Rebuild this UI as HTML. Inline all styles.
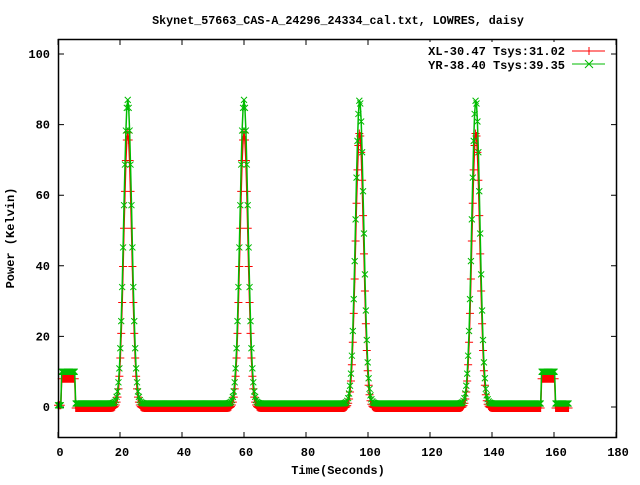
<!DOCTYPE html>
<html><head><style>
body{margin:0;background:#fff}
svg text{font-family:"Liberation Mono",monospace;font-weight:bold;font-size:12px;fill:#000}
</style></head><body>
<svg id="s" width="640" height="480" xmlns="http://www.w3.org/2000/svg">
<rect width="640" height="480" fill="#fff"/>
<text x="338" y="24" text-anchor="middle" style="font-size:11.7px">Skynet_57663_CAS-A_24296_24334_cal.txt, LOWRES, daisy</text>
<g id="ticks"></g>
<g id="data"></g>
<rect x="58.5" y="39.5" width="558" height="398" fill="none" stroke="#000" stroke-width="1.5"/>
<rect x="428" y="42" width="180" height="30" fill="#fff"/>
<text x="565" y="55" text-anchor="end">XL-30.47 Tsys:31.02</text>
<text x="565" y="69" text-anchor="end">YR-38.40 Tsys:39.35</text>
<line x1="572" y1="51" x2="605" y2="51" stroke="#f00"/>
<path d="M589 47v8" stroke="#f00"/>
<line x1="572" y1="64" x2="605" y2="64" stroke="#0b0"/>
<path d="M585 60l8 8M593 60l-8 8" stroke="#0b0"/>
<text x="338" y="474" text-anchor="middle">Time(Seconds)</text>
<text transform="translate(14,238) rotate(-90)" text-anchor="middle">Power (Kelvin)</text>
</svg>
<script>
function X(s){return 58+3.1*s}function Y(v){return 407-3.53*v}
var t=document.getElementById("ticks"),h="";
for(var v=0;v<=100;v+=20){h+='<text x="50" y="'+(Y(v)+4)+'" text-anchor="end">'+v+'</text>';
h+='<path d="M58 '+Y(v)+'h6M617 '+Y(v)+'h-6" stroke="#000"/>';}
for(var s=0;s<=180;s+=20){h+='<text x="'+(X(s)+2)+'" y="456" text-anchor="middle">'+s+'</text>';
h+='<path d="M'+X(s)+' 438v-6M'+X(s)+' 39v6" stroke="#000"/>';}
t.innerHTML=h;
var peaks=[22.5,60,97.3,134.8];
function f(s,pk,base,step){var v=base;
if((s>=1&&s<5.5)||(s>=156&&s<160.5))v=step;
for(var i=0;i<peaks.length;i++){var d=s-peaks[i];v+=pk*Math.exp(-d*d/(2*1.3*1.3));}return v;}
var d=document.getElementById("data"),o="";
function series(pk,base,step,col,mk){var p="",m="";
for(var s=0;s<=165;s+=0.3){var v=s<1?0.5:f(s,pk,base,step);var x=X(s),y=Y(v);
p+=(p?"L":"M")+x.toFixed(1)+" "+y.toFixed(1);
if(mk=="+")m+="M"+(x-4)+" "+y+"h8M"+x+" "+(y-4)+"v8";else m+="M"+(x-3)+" "+(y-3)+"l6 6M"+(x+3)+" "+(y-3)+"l-6 6";}
o+='<path d="'+p+'" fill="none" stroke="'+col+'" stroke-width="1.5"/><path d="'+m+'" fill="none" stroke="'+col+'" stroke-width="1"/>';}
series(78,-0.3,8,"#f00","+");
series(86,1,10,"#0b0","x");
d.innerHTML=o;
</script>
</body></html>
